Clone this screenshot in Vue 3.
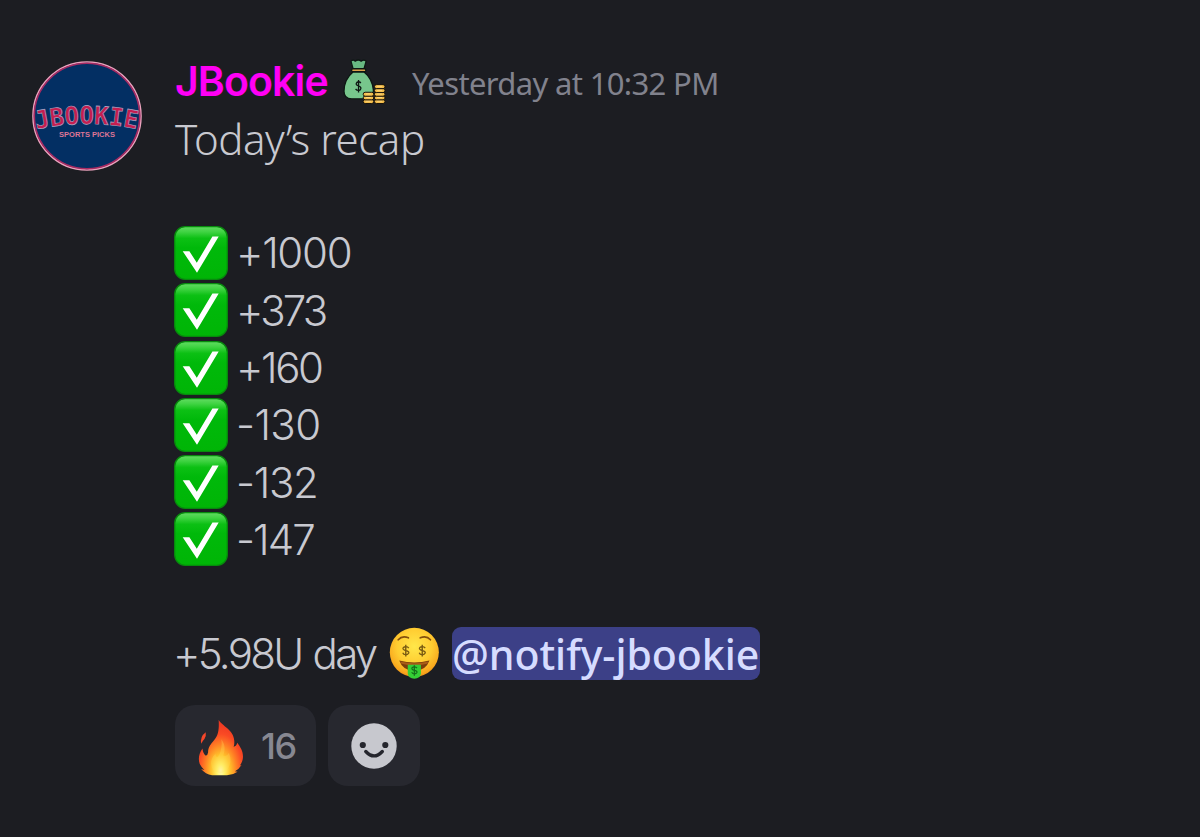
<template>
  <div class="chat">
    <article class="message">
      <svg class="avatar" viewBox="0 0 110 110">
        <defs>
          <path id="nameArc" d="M4.5 68.5 Q55 57.5 106 68.5" />
        </defs>
        <circle cx="55" cy="55" r="54" fill="#032f63" stroke="#e9a3bd" stroke-width="1.6" />
        <circle cx="55" cy="55" r="52.7" fill="none" stroke="#a82a62" stroke-width="1.6" />
        <text class="avatar-name">
          <textPath href="#nameArc" textLength="101" lengthAdjust="spacingAndGlyphs">JBOOKIE</textPath>
        </text>
        <text class="avatar-sub" x="27" y="75.5" textLength="56" lengthAdjust="spacingAndGlyphs">SPORTS PICKS</text>
      </svg>

      <div class="body">
        <header class="header">
          <span class="author">JBookie</span>
          <svg class="money-bag" viewBox="536 24 130 138">
            <g stroke="#0d1713" stroke-width="4" stroke-linejoin="round">
              <path d="M567 55 L560 30 Q567 24 573 30 Q582 23 591 30 Q599 24 606 30 L599 55Z" fill="#68b982" />
              <path d="M567 62 Q539 85 539 121 Q539 144 562 144 H602 Q628 142 628 118 Q625 83 599 62Z" fill="#77c68c" />
              <rect x="562" y="53" width="43" height="9" rx="4" fill="#dca24b" />
            </g>
            <path d="M590 96 Q585 90 578 94 Q572 102 583 105 Q594 109 588 117 Q580 121 574 114 M583 87 V125" fill="none" stroke="#0d1713" stroke-width="4" />
            <g v-for="coin in coins" :key="coin.id" fill="#f4bd4b" stroke="#17120b" stroke-width="3">
              <rect :x="coin.x" :y="coin.y" width="32" height="12" rx="6" />
              <path :d="`M${coin.x + 8} ${coin.y + 5} h15`" stroke="#ffd77e" stroke-width="3" />
            </g>
          </svg>
          <time class="time">Yesterday at 10:32 PM</time>
        </header>

        <p class="line title">Today’s recap</p>

        <ul class="picks">
          <li v-for="pick in picks" :key="pick.odds" class="line pick">
            <svg class="check" viewBox="0 0 54 54">
              <defs>
                <linearGradient id="checkFill" x1="0" y1="0" x2="0" y2="1">
                  <stop offset="0" stop-color="#62dc62" />
                  <stop offset="0.1" stop-color="#3fd342" />
                  <stop offset="0.22" stop-color="#0cc014" />
                  <stop offset="0.4" stop-color="#00b90a" />
                  <stop offset="1" stop-color="#00b506" />
                </linearGradient>
              </defs>
              <rect x="0.7" y="0.7" width="52.6" height="52.6" rx="10.5" fill="url(#checkFill)" stroke="#078b0d" stroke-width="1.3" />
              <path d="M8.7 25.2 H15.4 L22.8 36.8 L38.4 10.5 H44.7 L23 46.7Z" fill="#fff" />
            </svg>
            <span class="odds" :style="{ letterSpacing: pick.spacing + 'px' }">{{ pick.odds }}</span>
          </li>
        </ul>

        <p class="line summary">
          <span class="total">+5.98U day</span>
          <svg class="money-face" viewBox="672 36 155 158">
            <defs>
              <radialGradient id="faceFill" cx="0.5" cy="0.38" r="0.65">
                <stop offset="0" stop-color="#ffe74a" />
                <stop offset="0.55" stop-color="#ffcc31" />
                <stop offset="0.88" stop-color="#f8a51c" />
                <stop offset="1" stop-color="#e78310" />
              </radialGradient>
            </defs>
            <circle cx="749" cy="113" r="74.5" fill="url(#faceFill)" />
            <path d="M700 75 Q712 61 731 69 M767 69 Q786 61 798 75" fill="none" stroke="#85500d" stroke-width="5" stroke-linecap="round" />
            <path d="M703 138 Q749 150 795 138 Q784 169 749 170 Q714 169 703 138Z" fill="#7a3d0c" />
            <path d="M706 141 Q749 152 792 141 L788 148 Q749 158 710 148Z" fill="#a85b18" />
            <path d="M729 151 H769 V177 Q767 192 749 193 Q731 192 729 177Z" fill="#35cf35" />
            <g fill="none" stroke="#795a12" stroke-width="4.2">
              <path :d="dollar" transform="translate(723 108)" />
              <path :d="dollar" transform="translate(773 108)" />
              <path :d="dollar" transform="translate(749 168) scale(0.88)" stroke="#146f1b" />
            </g>
          </svg>
          <span class="mention">@notify-jbookie</span>
        </p>

        <footer class="reactions">
          <button class="reaction fire">
            <svg class="flame" viewBox="100 70 138 172">
              <defs>
                <radialGradient id="flameFill" gradientUnits="userSpaceOnUse" cx="168" cy="226" r="142" gradientTransform="translate(168 226) scale(0.6 1) translate(-168 -226)">
                  <stop offset="0" stop-color="#fffbc4" />
                  <stop offset="0.14" stop-color="#fff36a" />
                  <stop offset="0.34" stop-color="#ffc12b" />
                  <stop offset="0.56" stop-color="#ff8124" />
                  <stop offset="0.78" stop-color="#fa4a24" />
                  <stop offset="1" stop-color="#ed3922" />
                </radialGradient>
              </defs>
              <path d="M162 72 C171 91 207 101 209 135 Q210 148 207 154 Q216 153 218 142 C229 157 239 173 234 194 Q232 202 226 210 L231 209 Q223 222 211 228 L219 229 Q205 239 187 240 H142 Q122 237 109 221 L119 224 Q109 215 105 206 C99 191 103 173 113 159 Q115 174 122 180 Q128 182 130 171 C130 154 138 146 148 134 C163 117 163 96 162 72Z" fill="url(#flameFill)" />
              <path d="M123 110 Q125 122 119 130 Q113 135 110 145 Q104 124 123 110Z" fill="#f4472a" />
              <path d="M170 131 Q186 151 176 180 Q187 185 193 172 Q203 198 191 218 Q181 232 167 234 Q139 229 139 204 Q139 187 153 174 Q151 187 160 184 Q174 162 170 131Z" fill="#ffdf5a" opacity="0.3" />
            </svg>
            <span class="count">16</span>
          </button>
          <button class="reaction add">
            <svg class="smiley" viewBox="0 0 46 46">
              <circle cx="23" cy="23" r="22.7" fill="#c7c8ce" />
              <circle cx="11.8" cy="22" r="3.1" fill="#25262d" />
              <circle cx="34.3" cy="22" r="3.1" fill="#25262d" />
              <path d="M14.8 28.5 Q23 37.3 31.3 28.5" fill="none" stroke="#25262d" stroke-width="3.4" stroke-linecap="round" />
            </svg>
          </button>
        </footer>
      </div>
    </article>
  </div>
</template>

<script setup>
const picks = [
  { odds: '+1000', spacing: -1.3 },
  { odds: '+373', spacing: -2.8 },
  { odds: '+160', spacing: -2.4 },
  { odds: '-130', spacing: -0.6 },
  { odds: '-132', spacing: -1.3 },
  { odds: '-147', spacing: -1.9 }
]

// bottom coins first so the upper ones overlap them
const coins = [
  { id: 1, x: 597, y: 146 },
  { id: 2, x: 597, y: 135 },
  { id: 3, x: 597, y: 124 },
  { id: 4, x: 631, y: 146 },
  { id: 5, x: 631, y: 135 },
  { id: 6, x: 631, y: 124 },
  { id: 7, x: 631, y: 113 },
  { id: 8, x: 631, y: 101 }
]

const dollar = 'M9 -8 Q5 -14 -2 -12 Q-10 -10 -8 -5 Q-6 -1 1 0 Q10 2 9 7 Q6 13 -1 12 Q-7 12 -9 6 M0 -18 V18'
</script>

<style>
body {
  background: #1c1d22;
}
</style>

<style scoped>
.chat {
  box-sizing: border-box;
  width: 1200px;
  height: 837px;
  padding: 53px 32px 0;
  background: #1c1d22;
  color: #c8c9d0;
  font-family: Inter, 'Noto Sans', sans-serif;
  overflow: hidden;
}

.message {
  display: flex;
  align-items: flex-start;
  gap: 33px;
}

.avatar {
  width: 110px;
  height: 110px;
  margin-top: 8px;
  flex-shrink: 0;
}

.avatar-name {
  font-family: 'DejaVu Sans Mono', monospace;
  font-size: 25px;
  font-weight: 700;
  fill: #c41e50;
  stroke: #a7a8c6;
  stroke-width: 0.6px;
}

.avatar-sub {
  font-family: 'Liberation Sans', sans-serif;
  font-size: 7px;
  font-weight: 700;
  fill: #dc7596;
}

.body {
  flex: 1;
}

.header {
  display: flex;
  align-items: center;
  height: 57px;
  white-space: nowrap;
}

.author {
  width: 168px;
  padding-bottom: 2px;
  color: #ff00f5;
  font-size: 41px;
  font-weight: 600;
  letter-spacing: -0.9px;
}

.money-bag {
  width: 43px;
  height: 46px;
  margin-right: 26px;
}

.time {
  color: #81828d;
  font-family: 'Noto Sans', 'Open Sans', sans-serif;
  font-size: 31px;
  padding-top: 3px;
  letter-spacing: -0.65px;
}

.line {
  display: flex;
  align-items: center;
  height: 57.3px;
  margin: 0;
  font-size: 42px;
  font-weight: 300;
  line-height: 1;
  white-space: nowrap;
}

.title {
  font-family: 'Noto Sans', 'Open Sans', sans-serif;
  font-weight: 350;
  letter-spacing: -0.45px;
}

.picks {
  margin: 57px 0;
  padding: 0;
  list-style: none;
}

.check {
  width: 54px;
  height: 54px;
  margin: 0 8px 0 -1px;
}

.odds {
  padding-top: 1px;
}

.total {
  width: 214px;
  margin-left: -2px;
  padding-top: 1px;
  letter-spacing: -2.7px;
  word-spacing: 2px;
}

.money-face {
  width: 51px;
  height: 52px;
  margin: -2px 12px 0 2px;
}

.mention {
  box-sizing: border-box;
  width: 308px;
  height: 53px;
  border-radius: 9px;
  background: #3c4087;
  color: #d6dcff;
  font-family: 'Noto Sans', 'Open Sans', sans-serif;
  font-size: 41px;
  font-weight: 550;
  line-height: 54px;
  letter-spacing: -0.05px;
}

.reactions {
  display: flex;
  gap: 12px;
  margin-top: 23px;
}

.reaction {
  display: flex;
  align-items: center;
  height: 81px;
  padding: 0;
  border: 0;
  border-radius: 20px;
  background: #27282f;
  font-family: inherit;
}

.fire {
  width: 141px;
}

.flame {
  width: 46px;
  height: 57px;
  margin: 4px 17px 0 23px;
}

.count {
  color: #878892;
  font-size: 36px;
  font-weight: 550;
  letter-spacing: -1.5px;
}

.add {
  width: 92px;
  justify-content: center;
}

.smiley {
  width: 46px;
  height: 46px;
}
</style>
